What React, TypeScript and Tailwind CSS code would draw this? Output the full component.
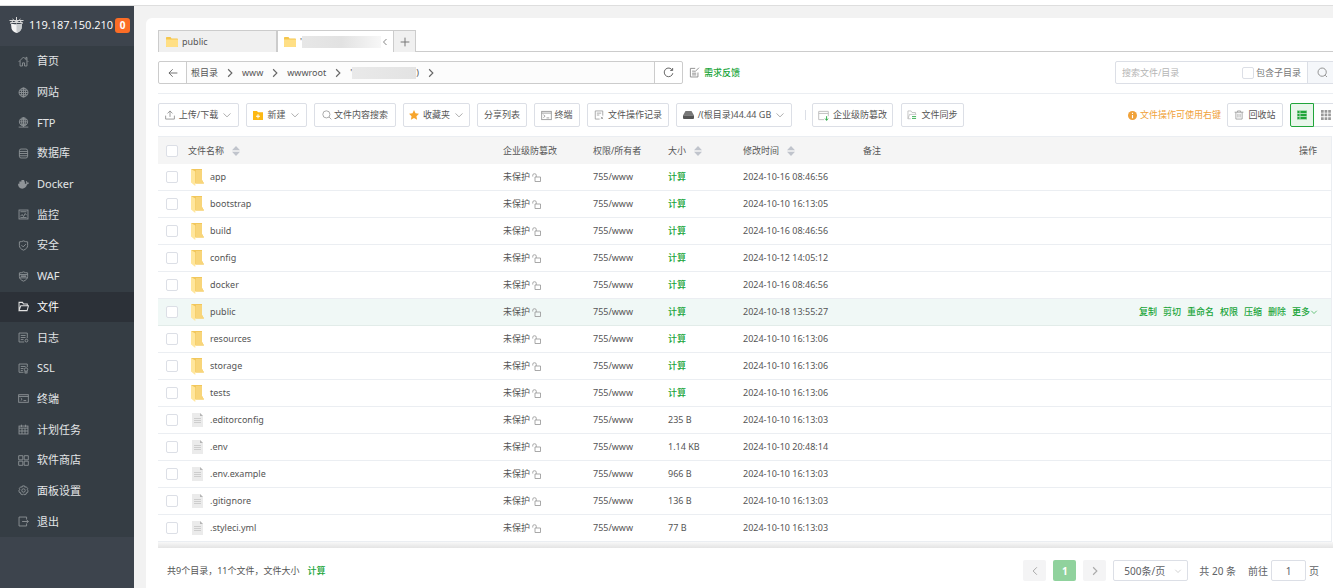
import React from "react";

type IconProps = { className?: string; children: React.ReactNode };

function Line({ className = "size-3", children }: IconProps) {
  return (
    <svg viewBox="0 0 16 16" className={className + " shrink-0"} fill="none" stroke="currentColor" strokeWidth="1.3" aria-hidden="true">
      {children}
    </svg>
  );
}

const Chevron = ({ className = "size-2.5 text-[#999]" }: { className?: string }) => (
  <Line className={className}><path d="M2.5 5.5 8 11l5.5-5.5" /></Line>
);

const Right = ({ className = "size-2.5 text-[#666]" }: { className?: string }) => (
  <Line className={className}><path d="m5 2 6 6-6 6" strokeWidth="1.8" /></Line>
);

const Left = ({ className = "size-2.5 text-[#666]" }: { className?: string }) => (
  <Line className={className}><path d="M11 2 5 8l6 6" strokeWidth="1.6" /></Line>
);

function TabFolder() {
  return (
    <svg viewBox="0 0 24 20" className="h-2.5 w-3 shrink-0" aria-hidden="true">
      <path d="M0 1.500C0 .7.7 0 1.500 0H9l2 3h11.500c.8 0 1.500.7 1.500 1.500V18.500c0 .8-.7 1.500-1.500 1.500h-21C.7 20 0 19.300 0 18.500Z" fill="#f5c64c" />
      <path d="M0 5h24v13.500c0 .8-.7 1.500-1.500 1.500h-21C.7 20 0 19.300 0 18.500Z" fill="#ffdf85" />
    </svg>
  );
}

function RowFolder() {
  return (
    <svg viewBox="0 0 13 17" className="h-[17px] w-[13px] shrink-0" aria-hidden="true">
      <path d="M0 0h11v11l2 3.500H3Z" fill="#f2c75c" />
      <path d="M5 1h6v10l2 3.500H5Z" fill="#f8d57a" />
      <path d="M0 0l4.300 2.500V17L0 13.500Z" fill="#ffe69c" />
    </svg>
  );
}

function RowFile() {
  return (
    <svg viewBox="0 0 13 16" className="h-4 w-[13px] shrink-0" aria-hidden="true">
      <path d="M1 1h8l3 3v11H1Z" fill="#ebebeb" />
      <path d="M9 1v3h3Z" fill="#b5b5b5" />
      <path d="M3 6.500h7M3 8.500h7M3 10.500h7" stroke="#c9c9c9" strokeWidth="0.9" />
    </svg>
  );
}

const OpenLock = () => (
  <svg viewBox="0 0 18 18" className="size-[9px] shrink-0 text-[#999]" fill="none" stroke="currentColor" strokeWidth="1.700" aria-hidden="true">
    <path d="M6 8h11v9H6ZM8.500 8V4.500a3 3 0 0 0-3-3h-1a3 3 0 0 0-3 3V7" />
  </svg>
);

const SortArrows = () => (
  <svg viewBox="0 0 8 10" className="h-2.5 w-2 shrink-0" fill="#c0c4cc" aria-hidden="true">
    <path d="M4 0 8 4.300H0ZM4 10 0 5.700h8Z" />
  </svg>
);

const Shield = () => <path d="M8 1.300c2 1 4 1.400 6 1.400V8c0 3.300-2.500 5.400-6 6.800C4.500 13.400 2 11.300 2 8V2.700c2 0 4-.4 6-1.400Z" />;

const menu: { label: string; icon: React.ReactNode; active?: boolean }[] = [
  { label: "首页", icon: <path d="M1 8.500 8 1.500l7 7M3 7v7.500h3.500V10h3v4.500H13V7M11.500 4.500V2h1.500v4" /> },
  { label: "网站", icon: <><circle cx="8" cy="8" r="6.500" /><ellipse cx="8" cy="8" rx="3" ry="6.500" /><path d="M8 1.500v13M1.500 8h13M2.500 4.800h11M2.500 11.200h11" /></> },
  { label: "FTP", icon: <><circle cx="8" cy="7" r="6" /><ellipse cx="8" cy="7" rx="2.800" ry="6" /><path d="M2 7h12M8 1v13.500M1 14.700h14M3 4h10M3 10.500h10" /></> },
  { label: "数据库", icon: <><rect x="2" y="1.500" width="12" height="13" rx="2.500" /><path d="M2 5h12M2 8h12M2 11.300h12" /></> },
  { label: "Docker", icon: <path d="M0 7h12c.2-1.500 0-2.300-.6-3.300l.9-.9c.9.7 1.400 1.600 1.600 2.500.8-.1 1.500 0 2.100.5-.5 1.400-1.500 2-2.700 2C12 12 9.500 14 6.200 14 2.200 14 0 11.300 0 7Zm2-3.200h8v3H2ZM5 1.500h4v3H5Z" fill="currentColor" stroke="none" /> },
  { label: "监控", icon: <><rect x="1.500" y="1.500" width="13" height="13" /><path d="M3.500 4h9M3.500 10.500 6 8l2 3 2.500-4.500L12.500 9M3.500 12.500h9" /></> },
  { label: "安全", icon: <><Shield /><path d="m5 7.500 2.500 2.500L11.500 6" /></> },
  { label: "WAF", icon: <><Shield /><path d="M2 5h12M2.500 10h11" /><path d="M4 7.500h8" strokeWidth="2" /></> },
  { label: "文件", icon: <path d="M1.500 14V2h5l1.500 2.500h5.500V7M1.500 14 4 7h11.200l-2 7Z" strokeWidth="1.500" />, active: true },
  { label: "日志", icon: <><path d="M13.500 9V1.500h-12v13H9M4 5h7M4 8h7M4 11h4" /><circle cx="12.300" cy="12.500" r="2" /></> },
  { label: "SSL", icon: <><path d="M13.500 6V1.500h-12v12H8M4 5h7M4 8h4M4 10.800h3" /><circle cx="11.700" cy="9.500" r="2.500" /><path d="M10.200 11.500V15l1.500-1 1.500 1v-3.500" /></> },
  { label: "终端", icon: <><rect x="1" y="2.500" width="14" height="11" /><path d="M1 5h14M4 7.500l2 1.700-2 1.700M8 11h4" /></> },
  { label: "计划任务", icon: <><rect x="1.500" y="3" width="13" height="11.500" /><path d="M1.500 6h13M5 1v3.500M11 1v3.500M1.500 10.200h13M5.800 6v8.500M10.200 6v8.500" /></> },
  { label: "软件商店", icon: <path d="M1 1h6v6H1ZM9 1h6v6H9ZM1 9h6v6H1ZM9 9h6v6H9Z" /> },
  { label: "面板设置", icon: <><circle cx="8" cy="8" r="2.500" /><path d="M6.500 1.300h3l.5 1.900 2-.6 2.100 2.600-1 1.500 1.600 1.300-.7 3-1.900.3-.2 2-2.900.9L8 12.800l-1.300 1.400-2.700-1-.1-2-2-.4-.7-3 1.700-1.200-1-1.600L4 2.600l2 .6Z" /></> },
  { label: "退出", icon: <path d="M12.500 5V1.500h-11v13h11V11M6 8h9M12.500 5.500 15 8l-2.500 2.500" /> },
];

type Row = { name: string; dir?: boolean; size?: string; date: string; active?: boolean };

const rows: Row[] = [
  { name: "app", dir: true, date: "2024-10-16 08:46:56" },
  { name: "bootstrap", dir: true, date: "2024-10-10 16:13:05" },
  { name: "build", dir: true, date: "2024-10-16 08:46:56" },
  { name: "config", dir: true, date: "2024-10-12 14:05:12" },
  { name: "docker", dir: true, date: "2024-10-16 08:46:56" },
  { name: "public", dir: true, date: "2024-10-18 13:55:27", active: true },
  { name: "resources", dir: true, date: "2024-10-10 16:13:06" },
  { name: "storage", dir: true, date: "2024-10-10 16:13:06" },
  { name: "tests", dir: true, date: "2024-10-10 16:13:06" },
  { name: ".editorconfig", size: "235 B", date: "2024-10-10 16:13:03" },
  { name: ".env", size: "1.14 KB", date: "2024-10-10 20:48:14" },
  { name: ".env.example", size: "966 B", date: "2024-10-10 16:13:03" },
  { name: ".gitignore", size: "136 B", date: "2024-10-10 16:13:03" },
  { name: ".styleci.yml", size: "77 B", date: "2024-10-10 16:13:03" },
];

const rowActions = ["复制", "剪切", "重命名", "权限", "压缩", "删除"];

const Check = ({ label, id }: { label?: string; id?: string }) => (
  <input
    type="checkbox"
    id={id}
    aria-label={label}
    className="block size-3 shrink-0 appearance-none rounded-xs border border-[#dcdfe6] bg-white checked:bg-[#20a53a]"
  />
);

function ToolButton({ width, children }: { width: string; children: React.ReactNode }) {
  return (
    <button
      type="button"
      className={width + " flex h-6 shrink-0 items-center justify-center gap-1 rounded-xs border border-[#dcdfe6] bg-white whitespace-nowrap text-[#555]"}
    >
      {children}
    </button>
  );
}

function Sidebar() {
  return (
    <aside className="flex w-[134px] shrink-0 flex-col bg-[#3d444d] text-[11px] text-[#e3e5e7]">
      <div className="flex h-10 items-center pr-1 pb-0.5 pl-[9px]">
        <svg viewBox="0 0 30 32" className="mr-[5px] h-4 w-[15px] shrink-0" aria-hidden="true">
          <path d="M4 13c3 2 19 2 22 0l-1 10c-1 4-5 7-10 9-5-2-9-5-10-9Z" fill="#f4f4f4" />
          <path d="M15 14v18c5-2 9-5 10-9l1-10c-2 1-6 1.500-11 1Z" fill="#c9ccce" />
          <path d="M1 7h28M3 11h24M7 4l8 7 8-7M15 0v13M2 13l7-6M28 13l-7-6" stroke="#d8d8d8" strokeWidth="2" fill="none" />
        </svg>
        <span className="flex-1 font-['Open_Sans','Noto_Sans',sans-serif] font-medium whitespace-nowrap text-white">119.187.150.210</span>
        <span className="flex size-[15px] shrink-0 items-center justify-center rounded-[3px] bg-[#fc6d26] text-[10px] font-bold text-white">0</span>
      </div>
      <nav className="grid h-[491px] auto-rows-fr bg-[#353d44]">
        {menu.map((m) => (
          <a
            key={m.label}
            href="#"
            aria-current={m.active ? "page" : undefined}
            className={m.active ? "flex items-center gap-2 bg-[#2c3138] pl-[18px] text-white" : "flex items-center gap-2 pl-[18px]"}
          >
            <Line className={m.active ? "size-[11px] text-[#e0e0e0]" : "size-[11px] text-[#8f9498]"}>{m.icon}</Line>
            {m.label}
          </a>
        ))}
      </nav>
    </aside>
  );
}

function Tabs() {
  return (
    <div className="flex h-[22px] text-[#555]">
      <button type="button" className="flex w-[118px] items-center gap-1 border border-r-0 border-b-0 border-[#ccc] bg-[#f0f0f0] pl-[7px]">
        <TabFolder />
        public
      </button>
      <div className="flex w-[118px] items-center border border-b-0 border-l-2 border-[#ccc] bg-white pr-1 pl-1.5">
        <TabFolder />
        <span className="ml-1">'</span>
        <span className="h-3 w-20 bg-linear-to-r from-[#e7e7e7] via-[#e2e2e2] to-[#f7f7f7]" />
        <button type="button" aria-label="收起" className="ml-auto"><Left className="size-2 text-[#666]" /></button>
      </div>
      <button type="button" aria-label="新标签" className="flex w-[22px] items-center justify-center border border-b-0 border-l-0 border-[#ccc] bg-[#f0f0f0]">
        <Line className="size-2.5 text-[#777]"><path d="M8 1v14M1 8h14" strokeWidth="1.600" /></Line>
      </button>
      <div className="flex-1 border-b border-[#ccc]" />
    </div>
  );
}

function PathBar() {
  return (
    <div className="mt-[9px] flex h-[23px] items-stretch">
      <div className="flex rounded-xs border border-[#ccc] text-[#555]">
        <button type="button" aria-label="返回" className="flex w-7 items-center justify-center border-r border-[#ccc]">
          <Line className="size-2.5"><path d="M15 8H1.500M7.500 2l-6 6 6 6" /></Line>
        </button>
        <div className="flex w-[467px] items-center gap-[7px] bg-[#fcfcfc] pl-1">
          <a href="#">根目录</a>
          <Right />
          <a href="#">www</a>
          <Right />
          <a href="#">wwwroot</a>
          <Right />
          <a href="#" className="flex items-center">
            '
            <span className="h-3 w-16 bg-linear-to-r from-[#e9e9e9] to-[#e3e3e3]" />)
          </a>
          <Right />
        </div>
        <button type="button" aria-label="刷新" className="flex w-7 items-center justify-center border-l border-[#ccc]">
          <Line className="size-[11px]"><path d="M13.500 4.500A6.300 6.300 0 1 0 14.300 9M14 1.500v3.500h-3.500" /></Line>
        </button>
      </div>
      <a href="#" className="ml-1.5 flex items-center gap-1 font-medium text-[#20a53a]">
        <Line className="size-[11px] text-[#888]"><path d="M9 2H2v12.500h11V8M4.500 6h4M4.500 9h6M4.500 11.500h6M8.500 7l6-6" /></Line>
        需求反馈
      </a>
      <div className="-mr-[5px] ml-auto flex w-[223px] rounded-xs border border-[#dcdfe6]">
        <input type="text" aria-label="搜索文件/目录" placeholder="搜索文件/目录" className="min-w-0 flex-1 pl-1.5 outline-none placeholder:text-[#b5b5b5]" />
        <div className="flex items-center gap-0.5 pr-1.5">
          <Check id="subdirs" />
          <label htmlFor="subdirs" className="text-[#777]">包含子目录</label>
        </div>
        <button type="button" aria-label="搜索" className="flex w-[30px] items-center justify-center border-l border-[#dcdfe6] bg-[#f5f7fa]">
          <Line className="size-[11px] text-[#888]"><circle cx="7.500" cy="7.500" r="6" /><path d="m12 12 2.500 2.500" /></Line>
        </button>
      </div>
    </div>
  );
}

function Toolbar() {
  return (
    <div className="mt-[9px] flex items-center border-t border-[#ebeef2] pt-[9px] pb-[9px]">
      <div className="flex items-center gap-[7px]">
        <ToolButton width="w-[81px]">
          <Line className="size-2.5 text-[#888]"><path d="M8 11V1.500M4 5.500l4-4 4 4M1 9v5.500h14V9" /></Line>
          上传/下载
          <Chevron />
        </ToolButton>
        <ToolButton width="w-[61px]">
          <svg viewBox="0 0 20 18" className="h-[9px] w-2.5 shrink-0" aria-hidden="true">
            <path d="M0 0h8l2 2.500h10V18H0Z" fill="#fdb813" />
            <path d="M10 6.500v8M6 10.500h8" stroke="#fff" strokeWidth="2" />
          </svg>
          新建
          <Chevron />
        </ToolButton>
        <ToolButton width="w-[82px]">
          <Line className="size-2.5 text-[#999]"><circle cx="7" cy="7" r="5.700" /><path d="m11.300 11.300 3.700 3.700" /></Line>
          <span className="-ml-0.5">文件内容搜索</span>
        </ToolButton>
        <ToolButton width="w-[67px]">
          <svg viewBox="0 0 20 20" className="size-2.5 shrink-0" aria-hidden="true">
            <path d="m10 0 3 6.600 7 .9-5.100 5 1.300 7.200L10 16.200l-6.200 3.500 1.300-7.200L0 7.500l7-.9Z" fill="#f7a52c" />
          </svg>
          收藏夹
          <Chevron />
        </ToolButton>
        <ToolButton width="w-[50px]">分享列表</ToolButton>
        <ToolButton width="w-[46px]">
          <Line className="size-[11px] text-[#999]"><rect x="1" y="2" width="14" height="12" /><path d="M1 4.500h14M3.500 7l2.500 2-2.500 2M8 11.500h4" /></Line>
          <span className="-ml-0.5">终端</span>
        </ToolButton>
        <ToolButton width="w-[82px]">
          <Line className="size-2.5 text-[#999]"><path d="M14 9V1.500H2v13h7M4.500 5h7M4.500 8h4M11 11l3.500 3.500M14 11l-3 3.500" /></Line>
          文件操作记录
        </ToolButton>
        <ToolButton width="w-[116px]">
          <svg viewBox="0 0 22 16" className="h-2 w-[11px] shrink-0" aria-hidden="true">
            <path d="M5 0h12l4.500 8H.5Z" fill="#777" />
            <path d="M0 8.500h22V14a2 2 0 0 1-2 2H2a2 2 0 0 1-2-2Z" fill="#555" />
          </svg>
          /(根目录)44.44 GB
          <Chevron />
        </ToolButton>
      </div>
      <span className="mr-[6px] ml-[13px] h-2.5 w-px bg-[#dcdfe6]" />
      <div className="flex items-center gap-2">
        <ToolButton width="w-[81px]">
          <Line className="size-[11px] text-[#bbb]"><path d="M15 9V2H1v12h8M1 5h14" /><path d="M12.500 9v6M10.300 12.500l2.200 2.500 2.200-2.500" stroke="#20a53a" /></Line>
          企业级防篡改
        </ToolButton>
        <ToolButton width="w-[63px]">
          <Line className="size-2.5 text-[#bbb]"><path d="M6 14H1.500V1.500h5L8 4h5.500v3M1.500 14 4 7h11" /><path d="M8 10.500h6.500M8 13.500h6.500" stroke="#20a53a" /></Line>
          文件同步
        </ToolButton>
      </div>
      <div className="-mr-[5px] ml-auto flex items-center">
        <span className="mr-1.5 flex items-center gap-[3px] whitespace-nowrap text-[#f0a23a]">
          <svg viewBox="0 0 16 16" className="size-[9px] shrink-0" aria-hidden="true">
            <circle cx="8" cy="8" r="8" fill="#f0a23a" />
            <path d="M8 3v2.500M8 7v6" stroke="#fff" strokeWidth="2" />
          </svg>
          文件操作可使用右键
        </span>
        <ToolButton width="w-14">
          <Line className="size-2.5 text-[#999]"><path d="M1 3.500h14M5.500 3.500v-2h5v2M3 3.500v11h10v-11M6.300 6v6M9.700 6v6" /></Line>
          回收站
        </ToolButton>
        <div className="ml-[7px] flex">
          <button type="button" aria-label="列表视图" aria-pressed="true" className="flex size-6 items-center justify-center rounded-l-xs border border-[#20a53a] bg-[#e9f6eb]">
            <svg viewBox="0 0 10 10" className="size-2.5" aria-hidden="true">
              <path d="M0 0h10v10H0Z" fill="#a9dbb3" />
              <path d="M.5 1h2v2h-2ZM3.500 1h6v2h-6ZM.5 4h2v2h-2ZM3.500 4h6v2h-6ZM.5 7h2v2h-2ZM3.500 7h6v2h-6Z" fill="#20a53a" />
            </svg>
          </button>
          <button type="button" aria-label="网格视图" aria-pressed="false" className="flex size-6 items-center justify-center rounded-r-xs border border-l-0 border-[#dcdfe6] bg-white">
            <svg viewBox="0 0 10 10" className="size-2.5" fill="#999" aria-hidden="true">
              <path d="M0 0h2.700v2.700H0ZM3.600 0h2.700v2.700H3.600ZM7.200 0h2.700v2.700H7.200ZM0 3.600h2.700v2.700H0ZM3.600 3.600h2.700v2.700H3.600ZM7.200 3.600h2.700v2.700H7.200ZM0 7.200h2.700v2.700H0ZM3.600 7.200h2.700v2.700H3.600ZM7.200 7.200h2.700v2.700H7.200Z" />
            </svg>
          </button>
        </div>
      </div>
    </div>
  );
}

function FileTable() {
  return (
    <table className="w-full table-fixed border-separate border-spacing-0 border-r border-[#ebeef2] text-left text-[#555]">
      <colgroup>
        <col className="w-[22px]" />
        <col className="w-[315px]" />
        <col className="w-[90px]" />
        <col className="w-[75px]" />
        <col className="w-[75px]" />
        <col className="w-[120px]" />
        <col />
        <col className="w-[220px]" />
      </colgroup>
      <thead>
        <tr className="h-7 bg-[#f5f5f5] *:border-t *:border-[#ebeef2] *:p-0 *:pl-2 *:font-normal">
          <th><Check label="全选" /></th>
          <th><span className="flex items-center gap-2">文件名称<SortArrows /></span></th>
          <th>企业级防篡改</th>
          <th>权限/所有者</th>
          <th><span className="flex items-center gap-2">大小<SortArrows /></span></th>
          <th><span className="flex items-center gap-2">修改时间<SortArrows /></span></th>
          <th>备注</th>
          <th><span className="block pr-3.5 text-right">操作</span></th>
        </tr>
      </thead>
      <tbody>
        {rows.map((r) => (
          <tr
            key={r.name}
            className={
              r.active
                ? "h-[27px] bg-[#f0f8f6] *:border-b *:border-[#e2ece9] *:p-0 *:pl-2"
                : "h-[27px] *:border-b *:border-[#ebeef2] *:p-0 *:pl-2"
            }
          >
            <td><Check label={r.name} /></td>
            <td>
              <span className="flex items-center gap-1.5 pl-[3px]">
                {r.dir ? <RowFolder /> : <RowFile />}
                <a href="#">{r.name}</a>
              </span>
            </td>
            <td><span className="flex items-center gap-0.5">未保护<OpenLock /></span></td>
            <td>755/www</td>
            <td>{r.dir ? <a href="#" className="font-medium text-[#20a53a]">计算</a> : r.size}</td>
            <td className="whitespace-nowrap">{r.date}</td>
            <td />
            <td>
              {r.active && (
                <span className="flex items-center justify-end gap-1.5 pr-[13px] font-medium whitespace-nowrap text-[#20a53a]">
                  {rowActions.map((a) => <a key={a} href="#">{a}</a>)}
                  <a href="#" className="flex items-center">更多<Chevron className="size-2 text-[#20a53a]" /></a>
                </span>
              )}
            </td>
          </tr>
        ))}
      </tbody>
    </table>
  );
}

function Footer() {
  return (
    <footer className="flex items-center justify-between pt-3 pr-3.5 pb-2 pl-[9px] text-[#555]">
      <div>
        共9个目录，11个文件，文件大小
        <a href="#" className="ml-2 font-medium text-[#20a53a]">计算</a>
      </div>
      <div className="flex h-[21px] items-stretch text-[10px] text-[#606266]">
        <button type="button" aria-label="上一页" className="mr-[7px] flex w-[23px] items-center justify-center rounded-xs bg-[#f4f4f5]"><Left className="size-2.5 text-[#aaa]" /></button>
        <button type="button" className="mr-[7px] w-[23px] rounded-xs bg-[#90d29d] font-bold text-white">1</button>
        <button type="button" aria-label="下一页" className="mr-[7px] flex w-[23px] items-center justify-center rounded-xs bg-[#f4f4f5]"><Right className="size-2.5 text-[#aaa]" /></button>
        <div className="relative mr-[11px] w-[75px]">
          <select aria-label="每页条数" className="h-full w-full appearance-none rounded-xs border border-[#dcdfe6] bg-white pl-2.5">
            <option>500条/页</option>
          </select>
          <span className="pointer-events-none absolute inset-y-0 right-1.5 flex items-center"><Chevron className="size-2 text-[#bbb]" /></span>
        </div>
        <span className="mr-3 self-center">共 20 条</span>
        <label htmlFor="goto" className="mr-[3px] self-center">前往</label>
        <input id="goto" type="text" defaultValue="1" className="mr-[3px] w-[35px] rounded-xs border border-[#dcdfe6] text-center" />
        <span className="self-center">页</span>
      </div>
    </footer>
  );
}

export default function App() {
  return (
    <div className="flex min-h-screen flex-col overflow-hidden bg-[#f2f2f2] font-['Noto_Sans','Noto_Sans_CJK_SC',sans-serif] text-[9px] leading-[14px]">
      <div className="h-1.5 border-b border-[#dedede] bg-white" />
      <div className="flex flex-1">
        <Sidebar />
        <main className="flex min-w-0 flex-1 flex-col pt-3 pl-3">
          <section className="flex-1 rounded-tl-md bg-white pt-3 pl-3">
            <Tabs />
            <PathBar />
            <Toolbar />
            <div className="pr-px">
              <FileTable />
            </div>
            <div className="h-1.5 bg-linear-to-b from-[#f8f8f8] to-[#e4e4e4]" />
            <Footer />
          </section>
        </main>
      </div>
    </div>
  );
}
